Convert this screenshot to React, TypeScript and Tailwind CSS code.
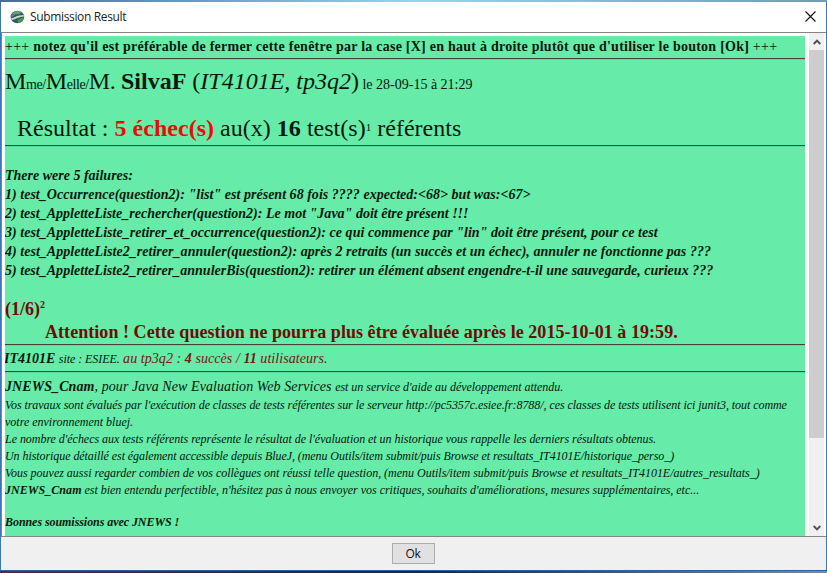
import React from "react";

function Rule() {
  return <div className="h-[2px] shrink-0 border-t border-[#44403c] bg-[#63d79b]" />;
}

function Row({ className, children }: { className: string; children: React.ReactNode }) {
  return <div className={"shrink-0 whitespace-pre " + className}>{children}</div>;
}

function AppIcon() {
  return (
    <svg width="15" height="14" viewBox="0 0 15 14" className="shrink-0">
      <ellipse cx="7.4" cy="7" rx="6.8" ry="6.2" fill="#36566f" />
      <path d="M2.6 3.2C5 .8 9 .2 11.8 2.1L9 4.3 5.4 4.2 2.6 6Z" fill="#62a06c" />
      <path d="M1 8.4C4 8 7 5.4 13.6 5.1L14 6.6C9 6.6 6 9.5 2 10Z" fill="#c4e2bd" />
      <path d="M7.5 9.8 13.8 7.2C13.5 10 11 12.8 8 13Z" fill="#4c9a4a" />
      <path d="M.8 6 3 3.4 4.4 5.1 1.2 7.6Z" fill="#5a7f9d" />
    </svg>
  );
}

const failures = [
  { text: "There were 5 failures:", cls: "tracking-[0px]" },
  { text: '1) test_Occurrence(question2): "list" est présent 68 fois ???? expected:<68> but was:<67>', cls: "tracking-[0.023px]" },
  { text: '2) test_AppletteListe_rechercher(question2): Le mot "Java" doit être présent !!!', cls: "tracking-[0.01px]" },
  { text: '3) test_AppletteListe_retirer_et_occurrence(question2): ce qui commence par "lin" doit être présent, pour ce test', cls: "tracking-[0.033px]" },
  { text: "4) test_AppletteListe2_retirer_annuler(question2): après 2 retraits (un succès et un échec), annuler ne fonctionne pas ???", cls: "tracking-[0.033px]" },
  { text: "5) test_AppletteListe2_retirer_annulerBis(question2): retirer un élément absent engendre-t-il une sauvegarde, curieux ???", cls: "tracking-[0.02px]" },
];

const notes = [
  { text: "Vos travaux sont évalués par l'exécution de classes de tests référentes sur le serveur http://pc5357c.esiee.fr:8788/, ces classes de tests utilisent ici junit3, tout comme", cls: "tracking-[-0.053px]" },
  { text: "votre environnement bluej.", cls: "tracking-[0px]" },
  { text: "Le nombre d'échecs aux tests référents représente le résultat de l'évaluation et un historique vous rappelle les derniers résultats obtenus.", cls: "tracking-[-0.038px]" },
  { text: "Un historique détaillé est également accessible depuis BlueJ, (menu Outils/item submit/puis Browse et resultats_IT4101E/historique_perso_)", cls: "tracking-[-0.067px]" },
  { text: "Vous pouvez aussi regarder combien de vos collègues ont réussi telle question, (menu Outils/item submit/puis Browse et resultats_IT4101E/autres_resultats_)", cls: "tracking-[-0.012px]" },
];

export default function App() {
  return (
    <div className="flex h-[573px] w-[827px] flex-col overflow-hidden bg-[#3a76b0]">
      <div className="h-[2px] shrink-0 bg-linear-to-r from-[#4a6a9c] via-[#8fd8ee] to-[#6f9db5]" />
      <div className="ml-px mr-px flex h-[30px] shrink-0 items-center bg-white pl-[9px] pr-[10px] font-['Open_Sans',sans-serif] text-[12px] text-[#222]">
        <AppIcon />
        <span className="ml-[5px] tracking-[-0.35px]">Submission Result</span>
        <svg width="11" height="11" viewBox="0 0 11 11" className="mb-[2px] ml-auto" stroke="#111" strokeWidth="1.1">
          <path d="M.5.5 10.5 10.5M10.5.5.5 10.5" />
        </svg>
      </div>
      <div className="ml-px mr-px flex h-[505px] shrink-0 border-y border-l border-[#858585] bg-white">
        <div className="mt-[3px] ml-[3px] flex w-[800px] shrink-0 flex-col overflow-hidden bg-[#66eba8] font-['Liberation_Serif',serif] text-[#031a0b]">
          <Row className="h-[22px] text-[14px] leading-[22px] font-bold tracking-[0.245px]"><span className="font-normal">+++</span> notez qu'il est préférable de fermer cette fenêtre par la case [X] en haut à droite plutôt que d'utiliser le bouton [Ok] <span className="font-normal">+++</span></Row>
          <Rule />
          <Row className="h-[43px] text-[24px] leading-[43px]">
            <span className="tracking-[-0.4px]">M<span className="text-[14px] leading-none">me/</span>M<span className="text-[14px] leading-none">elle/</span>M. </span><b>SilvaF</b> (<i>IT4101E, tp3q2</i>)<span className="text-[14px] leading-none"> le 28-09-15 à 21:29</span>
          </Row>
          <Row className="h-[42px] pl-[12px] text-[24px] leading-[50px] tracking-[0.02px]">
            Résultat : <b className="text-[#ee0b05]">5 échec(s)</b> au(x) <b>16</b> test(s)<span className="relative -top-[5px] text-[11px] leading-none">1</span> référents
          </Row>
          <Rule />
          <div className="h-[19px] shrink-0" />
          {failures.map((f) => (
            <Row key={f.text} className={"h-[19px] text-[14px] leading-[19px] font-bold italic " + f.cls}>{f.text}</Row>
          ))}
          <Row className="mt-[18px] h-[22px] text-[18px] leading-[22px] font-bold text-[#6e0c05]">
            (1/6)<span className="relative -top-[7px] text-[10px] leading-none">2</span>
          </Row>
          <Row className="h-[24px] pl-[40px] text-[18px] leading-[24px] font-bold tracking-[0.05px] text-[#6e0c05]">Attention ! Cette question ne pourra plus être évaluée après le 2015-10-01 à 19:59.</Row>
          <Rule />
          <Row className="h-[25px] text-[14px] leading-[26px] italic">
            <b className="-ml-px">IT4101E</b> <span className="text-[12px] leading-none tracking-[-0.07px]">site : ESIEE.</span> <span className="tracking-[0.06px] text-[#6e2012]">au tp3q2 : <b>4</b> succès / <b>11</b> utilisateurs.</span>
          </Row>
          <Rule />
          <Row className="h-[23px] text-[14px] leading-[27px] italic">
            <span className="tracking-[0.08px]"><b>JNEWS_Cnam</b>, pour Java New Evaluation Web Services </span><span className="text-[12px] leading-none tracking-[-0.03px]">est un service d'aide au développement attendu.</span>
          </Row>
          {notes.map((n) => (
            <Row key={n.text} className={"h-[17px] text-[12px] leading-[19px] italic " + n.cls}>{n.text}</Row>
          ))}
          <Row className="h-[17px] text-[12px] leading-[19px] tracking-[-0.027px] italic"><b className="tracking-[0.05px]">JNEWS_Cnam</b> est bien entendu perfectible, n'hésitez pas à nous envoyer vos critiques, souhaits d'améliorations, mesures supplémentaires, etc...</Row>
          <Row className="mt-[15px] h-[17px] text-[12px] leading-[18px] font-bold tracking-[-0.06px] italic">Bonnes soumissions avec JNEWS !</Row>
        </div>
        <div className="ml-[4px] flex w-[15px] shrink-0 flex-col bg-[#f0f0f0]">
          <div className="flex h-[17px] shrink-0 items-center justify-center">
            <svg width="8" height="6" viewBox="0 0 8 6" fill="none" stroke="#505050" strokeWidth="1.9"><path d="M.7 5 4 1.6 7.3 5" /></svg>
          </div>
          <div className="h-[388px] bg-[#cdcdcd]" />
          <div className="mt-auto flex h-[17px] shrink-0 items-center justify-center">
            <svg width="8" height="6" viewBox="0 0 8 6" fill="none" stroke="#505050" strokeWidth="1.9"><path d="M.7 1 4 4.4 7.3 1" /></svg>
          </div>
        </div>
      </div>
      <div className="mx-px flex h-[33px] shrink-0 justify-center bg-[#f0f0f0] pt-[6px]">
        <button className="h-[21px] w-[43px] border border-[#adadad] bg-[#e1e1e1] pr-[1px] font-['Open_Sans',sans-serif] text-[12px] leading-[18px] tracking-[-0.4px] text-[#111]">Ok</button>
      </div>
      <div className="h-px shrink-0 bg-[#2c62a0]" />
      <div className="h-[2px] shrink-0 bg-linear-to-r from-[#5a2a3c] via-[#1a2546] to-[#808797]" />
    </div>
  );
}
